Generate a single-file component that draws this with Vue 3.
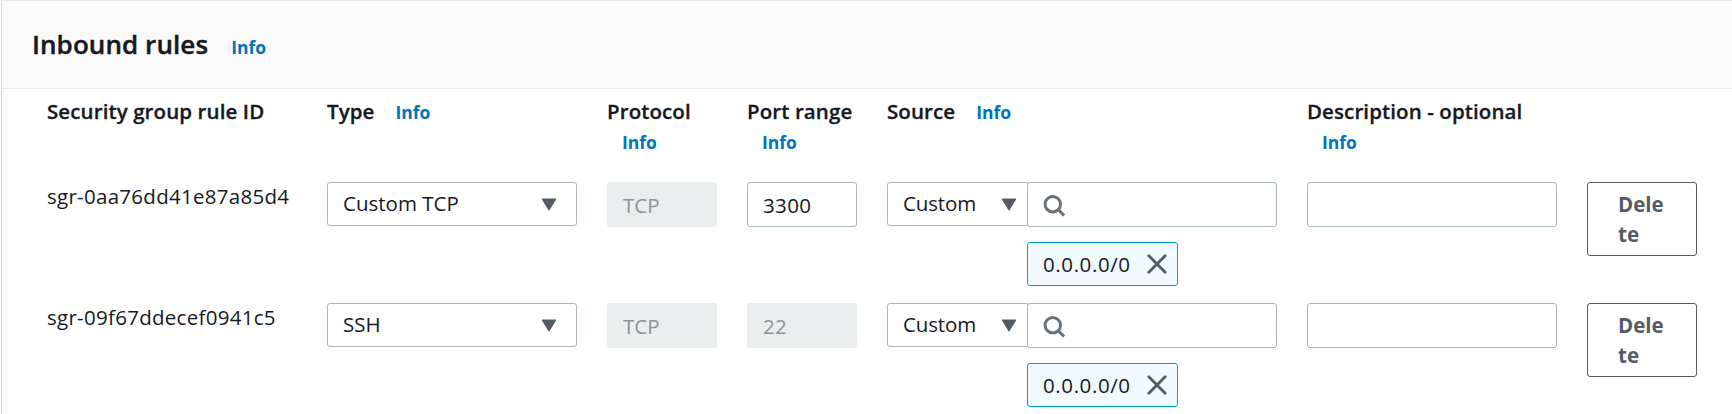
<script setup>
const rules = [
  { id: 'sgr-0aa76dd41e87a85d4', type: 'Custom TCP', protocol: 'TCP', port: '3300', locked: false, source: 'Custom', cidr: '0.0.0.0/0' },
  { id: 'sgr-09f67ddecef0941c5', type: 'SSH', protocol: 'TCP', port: '22', locked: true, source: 'Custom', cidr: '0.0.0.0/0' },
]
</script>

<template>
  <section class="panel">
    <header class="panel-head">
      <h2>Inbound rules</h2>
      <a class="info">Info</a>
    </header>
    <div class="grid labels">
      <div class="label">Security group rule ID</div>
      <div class="label"><span>Type</span><a class="info">Info</a></div>
      <div class="label stacked"><span>Protocol</span><a class="info">Info</a></div>
      <div class="label stacked"><span>Port range</span><a class="info">Info</a></div>
      <div class="label"><span>Source</span><a class="info">Info</a></div>
      <div class="label stacked"><span>Description - optional</span><a class="info">Info</a></div>
    </div>
    <div v-for="rule in rules" :key="rule.id" class="grid rule">
      <div class="rule-id">{{ rule.id }}</div>
      <div class="select">
        <span>{{ rule.type }}</span>
        <svg class="caret" width="16" height="13" viewBox="0 0 16 13"><path d="M1.6 1.2h12.8L8 11.6z" /></svg>
      </div>
      <div class="input disabled">{{ rule.protocol }}</div>
      <div class="input num" :class="{ disabled: rule.locked }">{{ rule.port }}</div>
      <div class="source">
        <div class="select joined">
          <span>{{ rule.source }}</span>
          <svg class="caret" width="16" height="13" viewBox="0 0 16 13"><path d="M1.6 1.2h12.8L8 11.6z" /></svg>
        </div>
        <div>
          <div class="input">
            <svg class="glass" width="24" height="24" viewBox="0 0 24 24"><circle cx="9.8" cy="10.2" r="7.7" /><path d="M15.2 15.6l5.9 5.9" /></svg>
          </div>
          <div class="token">
            <span>{{ rule.cidr }}</span>
            <svg class="close" width="20" height="20" viewBox="0 0 20 20"><path d="M1.8 1.8l16.4 16.4M18.2 1.8L1.8 18.2" /></svg>
          </div>
        </div>
      </div>
      <div class="input"></div>
      <button class="delete">Delete</button>
    </div>
  </section>
</template>

<style>
html, body {
  background: #fff;
  overflow: hidden;
}
</style>

<style scoped>
.panel {
  box-sizing: border-box;
  height: 414px;
  overflow: hidden;
  margin-left: 1px;
  border-left: 1px solid #d5dbdb;
  border-top: 1px solid #eaeded;
  font: 20.5px/30px "Open Sans", "Noto Sans", sans-serif;
  color: #16191f;
}
.panel-head {
  box-sizing: border-box;
  height: 88px;
  display: flex;
  align-items: baseline;
  padding: 25px 0 0 30px;
  gap: 23px;
  background: #fafafa;
  border-bottom: 1px solid #eaeded;
}
h2 {
  margin: 0;
  font-size: 26px;
  line-height: 36px;
  font-weight: 600;
  -webkit-text-stroke: 0.4px;
  letter-spacing: 0.08px;
}
.info {
  font-size: 17.5px;
  font-weight: 700;
  color: #0073bb;
  -webkit-text-stroke: 0;
  letter-spacing: 0;
}
.grid {
  display: grid;
  grid-template-columns: 250px 250px 110px 110px 390px 250px 110px;
  column-gap: 30px;
  padding-left: 45px;
  align-items: start;
}
.labels {
  height: 93px;
  padding-top: 7px;
  box-sizing: border-box;
}
.label {
  font-weight: 600;
  letter-spacing: 0.1px;
  -webkit-text-stroke: 0.3px;
  white-space: nowrap;
  display: flex;
  align-items: baseline;
  gap: 21px;
}
.stacked {
  flex-direction: column;
  align-items: flex-start;
  gap: 0;
}
.stacked .info {
  margin: 1px 0 0 15px;
}
.rule {
  height: 121px;
}
.rule-id {
  letter-spacing: 0.28px;
  margin-top: -1px;
}
.select,
.input {
  box-sizing: border-box;
  height: 45px;
  border: 1px solid #aab7b8;
  border-radius: 3px;
  padding: 0 15px;
  display: flex;
  align-items: center;
  background: #fff;
}
.select {
  height: 44px;
  justify-content: space-between;
  padding-right: 19px;
}
.select span {
  padding-bottom: 2px;
}
.disabled {
  background: #eaeded;
  border-color: #eaeded;
  color: #879596;
}
.num {
  letter-spacing: 0.4px;
}
.caret {
  fill: #545b64;
  stroke: #545b64;
  stroke-width: 1.5;
  stroke-linejoin: round;
}
.source {
  display: grid;
  grid-template-columns: 140px 250px;
}
.joined {
  width: 141px;
  border-radius: 3px 0 0 3px;
  padding-right: 10px;
  letter-spacing: -0.15px;
}
.glass {
  fill: none;
  stroke: #687078;
  stroke-width: 3;
  margin-top: 2px;
}
.token {
  box-sizing: border-box;
  width: 151px;
  height: 44px;
  margin-top: 15px;
  padding: 0 10px 0 15px;
  display: flex;
  align-items: center;
  justify-content: space-between;
  border: 1px solid #00a1c9;
  border-radius: 3px;
  background: #f1faff;
  letter-spacing: 0.6px;
}
.close {
  stroke: #545b64;
  stroke-width: 2.8;
  stroke-linecap: round;
}
.delete {
  height: 74px;
  width: 110px;
  padding: 6px 30px;
  border: 1px solid #545b64;
  border-radius: 3px;
  background: #fff;
  color: #545b64;
  font: inherit;
  font-weight: 700;
  text-align: left;
  word-break: break-all;
}
</style>
